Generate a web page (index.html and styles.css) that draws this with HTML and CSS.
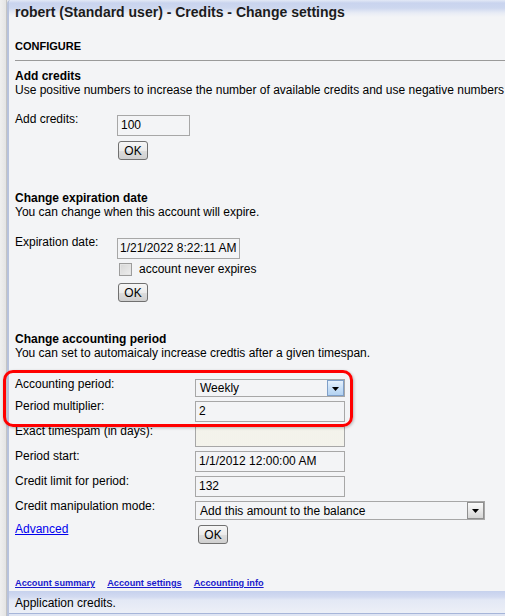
FILE: index.html
```html
<!DOCTYPE html>
<html>
<head>
<meta charset="utf-8">
<title>Credits - Change settings</title>
<link rel="stylesheet" href="styles.css">
</head>
<body>
<div class="frame">
  <header class="titlebar">
    <h1 class="title">robert (Standard user) - Credits - Change settings</h1>
  </header>
  <main class="content">
    <div class="configure">CONFIGURE</div>
    <div class="rule"></div>

    <section class="sec sec-1">
      <h2 class="sec-title">Add credits</h2>
      <p class="sec-desc">Use positive numbers to increase the number of available credits and use negative numbers to decrease them.</p>
      <div class="row-narrow row-add">
        <span class="lbl">Add credits:</span>
        <div class="ctrls">
          <div class="field w-add">100</div>
          <button class="btn btn-a">OK</button>
        </div>
      </div>
    </section>

    <section class="sec sec-2">
      <h2 class="sec-title">Change expiration date</h2>
      <p class="sec-desc">You can change when this account will expire.</p>
      <div class="row-narrow row-exp">
        <span class="lbl">Expiration date:</span>
        <div class="ctrls">
          <div class="field w-date">1/21/2022 8:22:11 AM</div>
          <label class="check-row"><span class="checkbox"></span><span class="check-text">account never expires</span></label>
          <button class="btn btn-b">OK</button>
        </div>
      </div>
    </section>

    <section class="sec sec-3">
      <h2 class="sec-title">Change accounting period</h2>
      <p class="sec-desc">You can set to automaicaly increase credtis after a given timespan.</p>
      <div class="form-wide">
        <div class="row-wide">
          <span class="lbl">Accounting period:</span>
          <div class="select sel-period"><span class="sel-text">Weekly</span><span class="arrow arrow-blue"><svg width="7" height="4" viewBox="0 0 7 4"><path d="M0 0H7L3.5 4Z" fill="#000"/></svg></span></div>
        </div>
        <div class="row-wide">
          <span class="lbl">Period multiplier:</span>
          <div class="field w-wide">2</div>
        </div>
        <div class="row-wide">
          <span class="lbl">Exact timespam (in days):</span>
          <div class="field w-wide disabled"></div>
        </div>
        <div class="row-wide">
          <span class="lbl">Period start:</span>
          <div class="field w-wide">1/1/2012 12:00:00 AM</div>
        </div>
        <div class="row-wide">
          <span class="lbl">Credit limit for period:</span>
          <div class="field w-wide">132</div>
        </div>
        <div class="row-wide">
          <span class="lbl">Credit manipulation mode:</span>
          <div class="select sel-mode"><span class="sel-text">Add this amount to the balance</span><span class="arrow arrow-gray"><svg width="7" height="4" viewBox="0 0 7 4"><path d="M0 0H7L3.5 4Z" fill="#000"/></svg></span></div>
        </div>
        <div class="row-wide row-adv">
          <span class="lbl"><a class="link" href="#">Advanced</a></span>
          <button class="btn btn-c">OK</button>
        </div>
      </div>
    </section>
  </main>
  <nav class="footer-links">
    <a href="#">Account summary</a>
    <a href="#">Account settings</a>
    <a href="#">Accounting info</a>
  </nav>
  <footer class="statusbar">Application credits.</footer>
</div>
<div class="highlight"></div>
</body>
</html>
```

FILE: styles.css
```css
html, body {
  margin: 0;
  padding: 0;
}
body {
  width: 505px;
  height: 616px;
  overflow: hidden;
  position: relative;
  background: linear-gradient(to right, #efefef 0, #e4e4e4 6px, #c4c4c4 6px, #c4c4c4 7px, #e9e9e9 7px);
  font-family: "Liberation Sans", Arial, sans-serif;
  font-size: 12px;
  line-height: 14px;
  color: #000;
}
.frame {
  margin-left: 7px;
  height: 616px;
  box-sizing: border-box;
  border-left: 2px solid #b7c2dc;
  border-top-left-radius: 4px;
  background: #f3f4f6;
  display: flex;
  flex-direction: column;
  overflow: hidden;
}
.titlebar {
  height: 26px;
  flex: none;
  box-sizing: border-box;
  padding: 4px 0 0 6px;
  background: linear-gradient(to bottom, #e3e9f6 0, #c9d4ee 3px, #cdd7ef 8px, #e8ecf5 13px, #f3f4f6 17px);
}
.title {
  margin: 0;
  font-size: 14px;
  line-height: 16px;
  font-weight: bold;
  color: #1c1c1c;
  white-space: nowrap;
}
.content {
  flex: 1;
  padding-left: 6px;
  white-space: nowrap;
}
.configure {
  margin-top: 14px;
  font-size: 11px;
  line-height: 13px;
  font-weight: bold;
}
.rule {
  margin-top: 7px;
  height: 1px;
  background: #9a9a9a;
}
.sec-title {
  margin: 0;
  font-size: 12px;
  line-height: 14px;
  font-weight: bold;
}
.sec-desc {
  margin: 0;
}
.sec-1 { margin-top: 8px; }
.sec-2 { margin-top: 31px; }
.sec-3 { margin-top: 30px; }

.row-narrow {
  display: grid;
  grid-template-columns: 102px auto;
  align-items: start;
}
.row-add { margin-top: 15px; }
.row-exp { margin-top: 16px; }
.ctrls {
  display: flex;
  flex-direction: column;
  align-items: flex-start;
  padding-top: 3px;
}
.field {
  box-sizing: border-box;
  height: 21px;
  border: 1px solid #a7a7a7;
  background: #f3f4f6;
  padding: 0 3px;
  line-height: 19px;
  font-size: 12px;
  overflow: hidden;
}
.w-add { width: 73px; }
.w-date { width: 123px; padding: 0 2px; }
.w-wide { width: 150px; padding: 0 3px; }
.disabled {
  background-color: #ebeae2;
  background-image: radial-gradient(circle, #f8f7f0 0.6px, transparent 0.9px);
  background-size: 2px 2px;
}
.btn {
  box-sizing: border-box;
  width: 30px;
  height: 19px;
  padding: 0;
  border: 1px solid #707070;
  border-radius: 3px;
  background: linear-gradient(to bottom, #f6f6f6 0, #ebebeb 50%, #dddddd 51%, #cfcfcf 100%);
  font-family: "Liberation Sans", Arial, sans-serif;
  font-size: 12px;
  line-height: 16px;
  color: #000;
}
.btn-a { margin: 5px 0 0 1px; }
.check-row {
  display: flex;
  align-items: center;
  height: 14px;
  margin-top: 3px;
  margin-left: 2px;
}
.checkbox {
  box-sizing: border-box;
  width: 13px;
  height: 13px;
  border: 1px solid #9c9c9c;
  background: linear-gradient(135deg, #d6d6d6 0, #eeeeee 100%);
  box-shadow: inset 0 0 0 1px #e4e4e4;
}
.check-text { margin-left: 7px; }
.btn-b { margin: 7px 0 0 1px; }

.form-wide {
  margin-top: 17px;
  display: flex;
  flex-direction: column;
  gap: 2px;
}
.row-wide {
  display: grid;
  grid-template-columns: 180px auto;
  align-items: start;
}
.row-wide > .field,
.row-wide > .select {
  margin-top: 2px;
}
.select {
  box-sizing: border-box;
  display: flex;
  align-items: center;
  border: 1px solid #a7a7a7;
  background: #f3f4f6;
}
.sel-period { width: 150px; height: 18px; }
.sel-mode { width: 290px; height: 19px; }
.sel-text {
  padding-left: 4px;
  flex: 1;
}
.arrow {
  box-sizing: border-box;
  width: 17px;
  height: 16px;
  margin-right: 0;
  display: flex;
  align-items: center;
  justify-content: center;
}
.arrow svg { display: block; margin-top: 1px; }
.arrow-blue {
  border: 1px solid #7f9fc8;
  background: linear-gradient(to bottom, #e6f1fc 0, #c9e0f7 50%, #b3d2f1 100%);
}
.arrow-gray {
  height: 17px;
  border: 1px solid #8f8f8f;
  background: linear-gradient(to bottom, #fafafa 0, #e9e9e9 50%, #d5d5d5 100%);
}
.link {
  color: #0000ee;
  text-decoration: underline;
}
.btn-c { margin: 3px 0 0 3px; }

.footer-links {
  flex: none;
  display: flex;
  gap: 12px;
  padding-left: 6px;
  margin-bottom: 2px;
  font-size: 9.2px;
  line-height: 11px;
  font-weight: bold;
}
.footer-links a {
  color: #1a1acc;
  text-decoration: underline;
}
.statusbar {
  flex: none;
  height: 23px;
  box-sizing: border-box;
  padding: 5px 0 0 6px;
  background: linear-gradient(to bottom, #c6d1ed 0, #d3dbf1 6px, #e3e8f5 9px, #edf0f7 23px);
  border-bottom: 1px solid #a6b5d9;
  margin-bottom: 2px;
  box-shadow: 0 2px 0 #dfe5f3;
}
.highlight {
  position: absolute;
  left: 3px;
  top: 370px;
  width: 350px;
  height: 57px;
  box-sizing: border-box;
  border: 3px solid #ff0000;
  border-radius: 10px;
  box-shadow: 1px 1px 3px rgba(0, 0, 0, 0.25);
}
```
